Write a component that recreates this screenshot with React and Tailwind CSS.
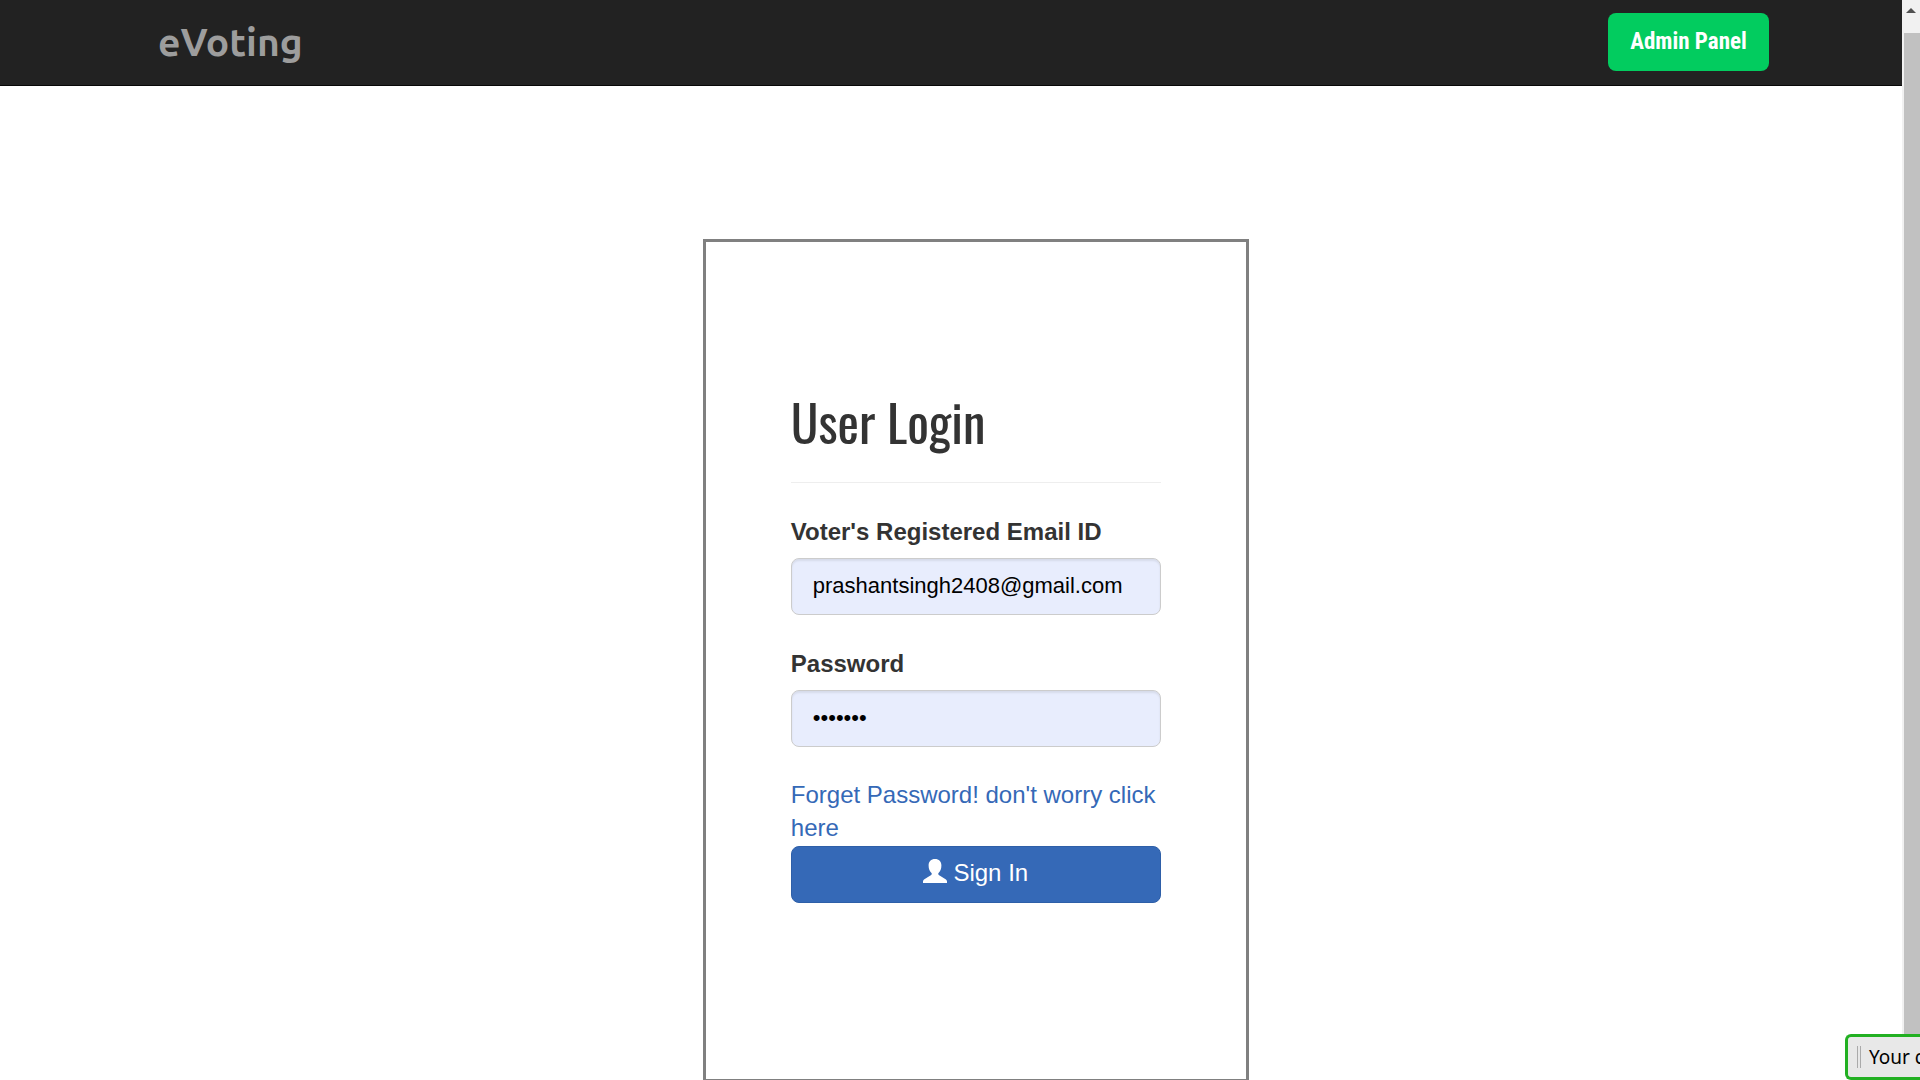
function Header() {
  return (
    <header className="flex h-[86px] items-start justify-between border-b border-[#080808] bg-[#222222] pr-[133px] pl-[158px]">
      <a href="#home" className="pt-3 font-['Ubuntu','Open_Sans',sans-serif] text-[39px] leading-[60px] font-bold text-[#9d9d9d]">
        eVoting
      </a>
      <button
        type="button"
        className="mt-[13px] h-[58px] w-[161px] rounded-lg bg-[#02cc5f] pb-0.5 font-['Roboto_Condensed','Liberation_Sans_Narrow',Roboto,sans-serif] text-[23px] font-bold text-white"
      >
        Admin Panel
      </button>
    </header>
  );
}

function Field({ id, label, type, value }) {
  return (
    <div>
      <label htmlFor={id} className="mb-2.5 block font-bold">
        {label}
      </label>
      <input
        id={id}
        type={type}
        defaultValue={value}
        className="block h-[57px] w-full rounded-lg border border-[#cccccc] bg-[#e8edfd] px-[21px] pb-0.5 text-[22px] text-black shadow-[inset_0_2px_2px_rgba(0,0,0,0.075)] outline-none"
      />
    </div>
  );
}

function UserIcon() {
  return (
    <svg viewBox="0 0 24 24" className="mb-1 size-6" fill="currentColor" aria-hidden="true">
      <path d="M12 0C8 0 5.600 2.600 5.600 6.500C5.600 10 6.700 12.200 8.700 14.300V15C8.700 15.700 8.200 16.100 7.400 16.600L1.800 20C.6 20.800 0 21.500 0 22.500V24H24V22.500C24 21.500 23.400 20.800 22.200 20L16.600 16.600C15.800 16.100 15.300 15.700 15.300 15V14.300C17.300 12.200 18.400 10 18.400 6.500C18.400 2.600 16 0 12 0Z" />
    </svg>
  );
}

function LoginCard() {
  return (
    <section className="mt-[153px] ml-[36.95%] h-[843px] w-[546px] shrink-0 border-3 border-[#808080] px-[85px] pt-36">
      <h1 className="border-b border-[#eeeeee] pb-[26px] font-['Oswald','Liberation_Sans_Narrow',sans-serif] text-[51px] leading-[70px]">
        User Login
      </h1>
      <form className="pt-8" onSubmit={(event) => event.preventDefault()}>
        <div className="flex flex-col gap-8">
          <Field id="email" label="Voter's Registered Email ID" type="email" value="prashantsingh2408@gmail.com" />
          <Field id="password" label="Password" type="password" value="2408abc" />
        </div>
        <a href="#forgot" className="block pt-[31px] text-[#3569b7]">
          Forget Password! don't worry click here
        </a>
        <button
          type="submit"
          className="mt-0.5 flex h-[57px] w-full items-center justify-center gap-1.5 rounded-lg border border-[#2e5fa8] bg-[#3569b7] pb-1 text-white"
        >
          <UserIcon />
          Sign In
        </button>
      </form>
    </section>
  );
}

function ScrollBar() {
  return (
    <div className="flex w-[18px] shrink-0 flex-col bg-[#f1f1f1]" aria-hidden="true">
      <div className="flex h-[33px] shrink-0 justify-center pt-2">
        <svg viewBox="0 0 10 5" className="h-[5px] w-[10px]" fill="#505050">
          <path d="M5 0L10 5H0Z" />
        </svg>
      </div>
      <div className="ml-0.5 flex-1 bg-[#c1c1c1]" />
    </div>
  );
}

export default function App() {
  return (
    <div className="relative flex h-screen overflow-hidden bg-white font-['Liberation_Sans',Arial,sans-serif] text-2xl leading-[33px] text-[#333333]">
      <div className="flex min-w-0 flex-1 flex-col">
        <Header />
        <main className="flex min-h-0 flex-1 items-start overflow-hidden">
          <LoginCard />
        </main>
      </div>
      <ScrollBar />
      <div className="absolute right-0 bottom-0 flex h-[46px] w-[75px] items-center gap-2 overflow-hidden rounded-l-md border-3 border-r-0 border-[#22b022] bg-[#e8e8e8] pl-[9px] font-['Noto_Sans',sans-serif] text-[19px] whitespace-nowrap text-black">
        <span className="h-[22px] w-1 shrink-0 border-x border-[#aaaaaa]" />
        <span>Your c</span>
      </div>
    </div>
  );
}
